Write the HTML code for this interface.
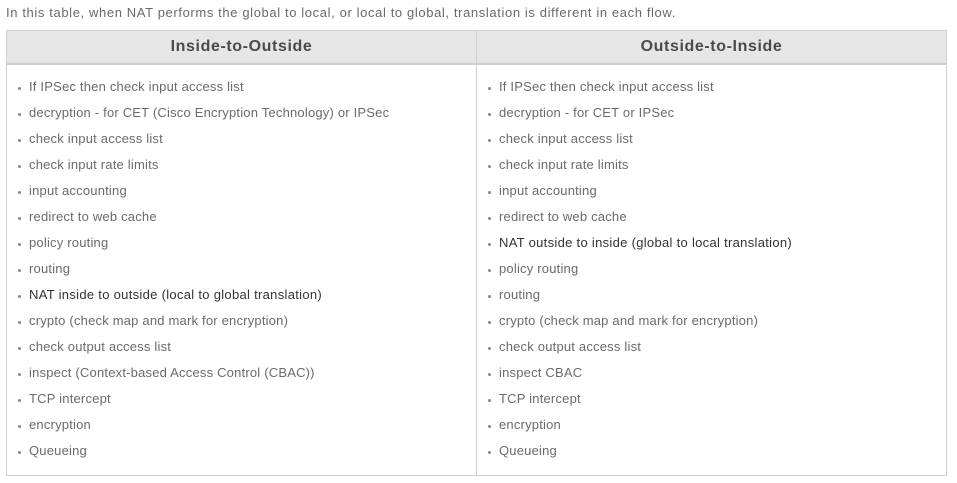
<!DOCTYPE html>
<html><head><style>
body{margin:0;width:957px;height:483px;background:#fff;font-family:"Liberation Sans",sans-serif;position:relative;overflow:hidden}
.intro{position:absolute;left:6px;top:5px;font-size:13px;color:#6a6a6a;white-space:nowrap;letter-spacing:0.62px}
.tbl{position:absolute;left:6px;top:30px;width:939px;height:444px;border:1px solid #d0d0d0}
.hd{position:absolute;left:0;top:0;width:939px;height:32px;background:#e6e6e6;border-bottom:2px solid #cfcfcf}
.h{position:absolute;top:0;height:32px;line-height:32px;font-size:16px;letter-spacing:0.6px;font-weight:bold;color:#4a4a4a;text-align:center}
.div{position:absolute;left:469px;top:0;width:1px;height:444px;background:#d0d0d0}
ul{position:absolute;top:43px;margin:0;padding:0;list-style:none}
li{height:26px;line-height:26px;font-size:13px;letter-spacing:0.2px;color:#6a6a6a;white-space:nowrap;position:relative;padding-left:17px}
li:before{content:"";position:absolute;left:6px;top:13px;width:3px;height:3px;background:#888;border-radius:50%}
li.b{color:#333;letter-spacing:0.3px}
</style></head><body>
<div class="intro">In this table, when NAT performs the global to local, or local to global, translation is different in each flow.</div>
<div class="tbl">
<div class="hd"></div>
<div class="h" style="left:0;width:469px">Inside-to-Outside</div>
<div class="h" style="left:470px;width:469px">Outside-to-Inside</div>
<div class="div"></div>
<ul style="left:5px">
<li>If IPSec then check input access list</li>
<li>decryption - for CET (Cisco Encryption Technology) or IPSec</li>
<li>check input access list</li>
<li>check input rate limits</li>
<li>input accounting</li>
<li>redirect to web cache</li>
<li>policy routing</li>
<li>routing</li>
<li class="b">NAT inside to outside (local to global translation)</li>
<li>crypto (check map and mark for encryption)</li>
<li>check output access list</li>
<li>inspect (Context-based Access Control (CBAC))</li>
<li>TCP intercept</li>
<li>encryption</li>
<li>Queueing</li>
</ul>
<ul style="left:475px">
<li>If IPSec then check input access list</li>
<li>decryption - for CET or IPSec</li>
<li>check input access list</li>
<li>check input rate limits</li>
<li>input accounting</li>
<li>redirect to web cache</li>
<li class="b">NAT outside to inside (global to local translation)</li>
<li>policy routing</li>
<li>routing</li>
<li>crypto (check map and mark for encryption)</li>
<li>check output access list</li>
<li>inspect CBAC</li>
<li>TCP intercept</li>
<li>encryption</li>
<li>Queueing</li>
</ul>
</div>
</body></html>
